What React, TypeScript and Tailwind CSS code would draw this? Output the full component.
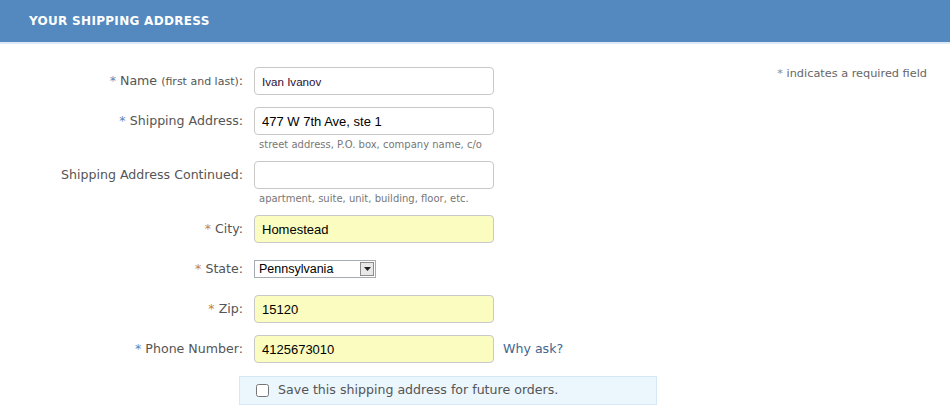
import { useState } from "react";

const labelFont = { fontFamily: '"DejaVu Sans", Verdana, sans-serif' };

function Label({ req, color, children }: { req?: boolean; color?: string; children: React.ReactNode }) {
  return (
    <div className="w-[243px] h-[28px] shrink-0 text-right text-[12.6px] text-[#555] leading-[28px]" style={labelFont}>
      {req && <span className={color === "orange" ? "text-[#c0843f]" : "text-[#5b86ba]"}>* </span>}
      {children}
    </div>
  );
}

function Field({ value, yellow, small }: { value: string; yellow?: boolean; small?: boolean }) {
  return (
    <input
      defaultValue={value}
      className={
        "ml-[11px] h-[28px] w-[240px] rounded-[4px] border border-[#c9c9c9] px-[7px] outline-none " +
        (yellow ? "bg-[#fafcc0] " : "bg-white ") +
        (small ? "text-[11.6px] text-[#2b0f35]" : "text-[13px] text-black")
      }
      style={{ fontFamily: '"Liberation Sans", Arial, sans-serif' }}
    />
  );
}

function Hint({ children }: { children: React.ReactNode }) {
  return (
    <div className="ml-[259px] mt-[4px] h-[12px] text-[10px] leading-[12px] text-[#777]" style={labelFont}>
      {children}
    </div>
  );
}

export default function App() {
  const [save, setSave] = useState(false);

  return (
    <div className="w-[950px] h-[412px] bg-white overflow-hidden">
      <div className="h-[42px] bg-[#5389be] flex items-center pl-[29px]">
        <span className="text-white text-[12px] font-bold tracking-[0.3px]" style={labelFont}>
          YOUR SHIPPING ADDRESS
        </span>
      </div>
      <div className="h-[2px] bg-[#dde9f4]" />

      <div className="flex justify-between pt-[23px]">
        <div className="flex flex-col">
          <div className="flex h-[28px]">
            <Label req>
              Name <span className="text-[11px]">(first and last)</span>:
            </Label>
            <Field value="Ivan Ivanov" small />
          </div>

          <div className="flex h-[28px] mt-[12px]">
            <Label req>Shipping Address:</Label>
            <Field value="477 W 7th Ave, ste 1" />
          </div>
          <Hint>street address, P.O. box, company name, c/o</Hint>

          <div className="flex h-[28px] mt-[10px]">
            <Label>Shipping Address Continued:</Label>
            <Field value="" />
          </div>
          <Hint>apartment, suite, unit, building, floor, etc.</Hint>

          <div className="flex h-[28px] mt-[10px]">
            <Label req color="orange">City:</Label>
            <Field value="Homestead" yellow />
          </div>

          <div className="flex h-[28px] mt-[12px] items-center">
            <Label req color="orange">State:</Label>
            <div
              className="ml-[11px] h-[18px] w-[122px] border border-[#a5acb2] bg-white flex items-center justify-between pl-[4px] pr-[1px] text-[12.5px] text-black"
              style={{ fontFamily: '"Liberation Sans", Arial, sans-serif' }}
            >
              <span className="leading-none">Pennsylvania</span>
              <span className="h-[14px] w-[14px] border border-[#8c8c8c] bg-[#e8e8e8] flex items-center justify-center">
                <svg width="7" height="4" viewBox="0 0 7 4">
                  <path d="M0 0h7L3.5 4z" fill="#222" />
                </svg>
              </span>
            </div>
          </div>

          <div className="flex h-[28px] mt-[12px]">
            <Label req color="orange">Zip:</Label>
            <Field value="15120" yellow />
          </div>

          <div className="flex h-[28px] mt-[12px] items-center">
            <Label req>Phone Number:</Label>
            <Field value="4125673010" yellow />
            <span className="ml-[9px] text-[12.6px] text-[#41668f]" style={labelFont}>
              Why ask?
            </span>
          </div>

          <div className="ml-[239px] mt-[13px] w-[418px] h-[29px] bg-[#ebf6fd] border border-[#d5e8f5] flex items-center pl-[16px]">
            <input
              type="checkbox"
              checked={save}
              onChange={(e) => setSave(e.target.checked)}
              className="h-[13px] w-[13px] m-0 accent-[#888]"
            />
            <span className="ml-[9px] text-[12.6px] text-[#555]" style={labelFont}>
              Save this shipping address for future orders.
            </span>
          </div>
        </div>

        <div className="pr-[23px] text-[11.3px] text-[#666] leading-[14px]" style={labelFont}>
          <span className="text-[#888]">*</span> indicates a required field
        </div>
      </div>
    </div>
  );
}
